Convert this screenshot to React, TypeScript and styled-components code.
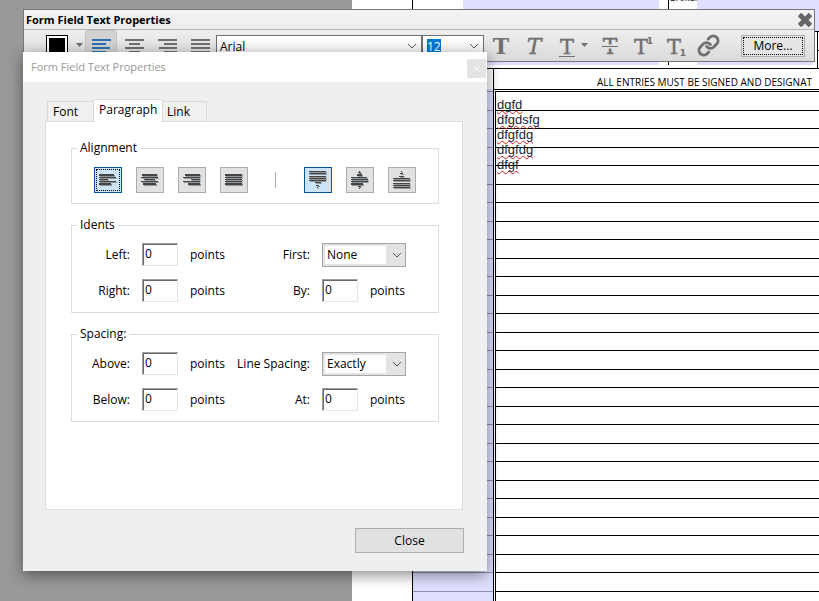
import React from "react";
import styled, { createGlobalStyle, css } from "styled-components";
import { Link as LinkIcon } from "lucide-react";

const ui = `"Open Sans", "Noto Sans", sans-serif`;
const ink = "#707070";
const lavender = "#dfe0ff";

const GlobalStyle = createGlobalStyle`
  *, *::before, *::after { box-sizing: border-box; }
  body { margin: 0; font: 12px/16px ${ui}; color: #000; }
  button, input, select, textarea { font: inherit; color: inherit; margin: 0; border-radius: 0; }
`;

const Desktop = styled.div`
  position: relative;
  height: 100vh;
  overflow: hidden;
  background: #999;
`;

/* ---------- document behind the windows ---------- */

const Page = styled.main`
  margin-left: 352px;
  padding-left: 60px;
  min-height: 100vh;
  background: #fff;
`;

const TopForm = styled.div`
  display: flex;
  height: 69px;
  border-bottom: 1px solid #000;
  border-left: 1px solid #000;
  padding-left: 50px;
`;

const TopField = styled.div`
  width: 196px;
  height: 65px;
  margin-right: 9px;
  background: ${lavender};
`;

const TopCell = styled.div`
  flex: 1;
  display: flex;
  height: 65px;
  border-left: 1px solid #000;
`;

const TopCaption = styled.span`
  display: flex;
  align-items: flex-end;
  width: 28px;
  height: 3px;
  padding-left: 1px;
  font-size: 9px;
  line-height: 10px;
`;

const TopCellRest = styled.div`
  flex: 1;
  background: ${lavender};
`;

const EdgeColumn = styled.div`
  display: flex;
  flex-direction: column;
  width: 6px;
  height: 68px;
`;

const EdgeField = styled.div`
  height: 32px;
  border-bottom: 1px solid #000;
  background: ${lavender};
`;

const EdgeCell = styled.div`
  height: 18px;
  margin-left: 4px;
  border-left: 1px solid #000;
  & + & { border-top: 1px solid #000; }
`;

const HeaderRow = styled.div`
  display: flex;
  height: 20px;
  padding-left: 81px;
`;

const HeaderText = styled.div`
  flex: 1;
  border-left: 1px solid #000;
  padding: 6px 0 0 103px;
  font-size: 10px;
  line-height: 14px;
  white-space: nowrap;
`;

const Ledger = styled.div`
  display: grid;
  grid-template-columns: 81px 1fr;
`;

const LabelColumn = styled.div`
  border-left: 1px solid #000;
  background: ${lavender};
`;

const LabelTop = styled.div`
  height: 3px;
  border-bottom: 1px solid #8e8eae;
`;

const EntryColumn = styled.div`
  position: relative;
  border-left: 3px double #000;
  border-top: 3px double #000;
`;

const Rule = styled.div<{ $soft?: boolean }>`
  height: 19px;
  border-bottom: 1px solid ${(p) => (p.$soft ? "#8e8eae" : "#000")};
  &:nth-of-type(even) { height: ${(p) => (p.$soft ? 19 : 18)}px; }
  ${(p) => p.$soft && css`&:nth-of-type(odd) { height: 18px; }`}
`;

const Entries = styled.textarea`
  position: absolute;
  top: 5px;
  left: 1px;
  width: 100%;
  height: 100%;
  padding: 0;
  border: 0;
  outline: 0;
  resize: none;
  overflow: hidden;
  background: transparent;
  color: #1d2433;
  font: 13px/15px "Liberation Sans", Arial, sans-serif;
  text-decoration: underline wavy #c22 1px;
  text-decoration-skip-ink: none;
  text-underline-offset: 1px;
`;

/* ---------- toolbar window ---------- */

const Toolbar = styled.section`
  position: absolute;
  top: 9px;
  left: 23px;
  right: 4px;
  border: 1px solid #777;
  background: linear-gradient(#f3f3f3, #ececec 36%, #eeeeee 40%, #dadada);
`;

const ToolbarTitle = styled.header`
  display: flex;
  justify-content: space-between;
  align-items: center;
  height: 20px;
  padding: 0 2px;
  border-bottom: 1px solid #b4b4b4;
`;

const ToolbarHeading = styled.h2`
  margin: 0;
  font-size: 11px;
  line-height: 18px;
  font-weight: 700;
  white-space: nowrap;
`;

const PlainButton = styled.button`
  display: flex;
  padding: 0;
  border: 0;
  background: none;
`;

const ToolRow = styled.div`
  display: flex;
  align-items: center;
  height: 31px;
  padding: 0 9px 0 22px;
`;

const Swatch = styled.button`
  width: 22px;
  height: 22px;
  padding: 0;
  border: 1px solid #000;
  background: #000;
  box-shadow: inset 0 0 0 2px #fff;
`;

const SwatchMenu = styled(PlainButton)`
  width: 17px;
  padding-left: 8px;
`;

const Tools = styled.div`
  display: flex;
  gap: 1px;
`;

const Tool = styled.button<{ $on?: boolean; $wide?: boolean }>`
  display: flex;
  align-items: center;
  justify-content: center;
  gap: ${(p) => (p.$wide ? 4 : 0)}px;
  width: ${(p) => (p.$wide ? 42 : 32)}px;
  height: 31px;
  padding: 0;
  border: 1px solid ${(p) => (p.$on ? "#c4c4c4" : "transparent")};
  border-radius: 3px;
  background: ${(p) => (p.$on ? "#d2d2d2" : "none")};
  color: ${(p) => (p.$on ? "#2a72b5" : ink)};
`;

const ComboFrame = styled.label<{ $w: number }>`
  display: flex;
  align-items: center;
  flex: 0 1 ${(p) => p.$w}px;
  height: 22px;
  border: 1px solid #6e6e6e;
  background: linear-gradient(#fff, #f2f2f2);
  padding: 2px 4px 0 3px;
`;

const ComboInput = styled.input`
  flex: 1;
  min-width: 0;
  padding: 0;
  border: 0;
  outline: 0;
  background: transparent;
`;

const Marked = styled.input`
  width: 14px;
  height: 15px;
  padding: 0;
  margin: 0 auto 0 1px;
  border: 0;
  outline: 0;
  background: #0078d7;
  color: #fff;
`;

const MoreButton = styled.button`
  width: 64px;
  height: 22px;
  margin-left: auto;
  padding: 0;
  border: 1px solid #adadad;
  background: #e6e6e6;
  outline: 1px dotted #000;
  outline-offset: -3px;
  line-height: 16px;
`;

/* ---------- dialog ---------- */

const Dialog = styled.section`
  position: absolute;
  top: 52px;
  left: 23px;
  width: 464px;
  max-width: calc(100vw - 23px);
  background: #efefef;
  box-shadow: 0 4px 14px rgba(0, 0, 0, 0.45);
`;

const DialogTitle = styled.header`
  display: flex;
  justify-content: space-between;
  align-items: center;
  height: 30px;
  padding: 0 1px 0 8px;
  background: #fff;
  color: #999;
`;

const DialogHeading = styled.h2`
  margin: 0;
  font-size: 11px;
  font-weight: 400;
`;

const DialogClose = styled.button`
  display: flex;
  align-items: center;
  justify-content: center;
  align-self: flex-end;
  width: 19px;
  height: 19px;
  margin-bottom: 4px;
  padding: 0;
  border: 0;
  background: #e3e3e3;
`;

const DialogBody = styled.div`
  padding: 17px 24px 18px 22px;
`;

const Tabs = styled.div`
  display: flex;
  align-items: flex-end;
  padding-left: 2px;
`;

const Tab = styled.button<{ $on?: boolean; $w: number }>`
  position: relative;
  width: ${(p) => p.$w}px;
  height: ${(p) => (p.$on ? 23 : 20)}px;
  margin-bottom: ${(p) => (p.$on ? -1 : 0)}px;
  padding: 0 0 ${(p) => (p.$on ? 2 : 0)}px 5px;
  border: 1px solid #d9d9d9;
  border-bottom: 0;
  background: ${(p) => (p.$on ? "#fff" : "#f0f0f0")};
  text-align: left;
  white-space: nowrap;
  &:last-child { border-left: 0; padding-left: 4px; }
  &:first-child { border-right: 0; }
`;

const Panel = styled.div`
  display: flex;
  flex-direction: column;
  gap: 13px;
  padding: 18px 23px 87px 25px;
  border: 1px solid #dcdcdc;
  background: #fff;
`;

const Group = styled.fieldset`
  min-width: 0;
  margin: 0;
  padding: 10px 0 9px;
  border: 1px solid #dcdcdc;
`;

const Legend = styled.legend`
  margin-left: 5px;
  padding: 0 3px;
  line-height: 16px;
`;

const AlignRow = styled.div`
  display: flex;
  align-items: center;
  gap: 14px;
  padding: 1px 0 1px 22px;
`;

const AlignButton = styled.button<{ $on?: boolean; $focus?: boolean }>`
  display: flex;
  align-items: center;
  justify-content: center;
  width: 28px;
  height: 26px;
  padding: 0;
  border: 1px solid ${(p) => (p.$on ? "#00559b" : "#adadad")};
  background: ${(p) => (p.$on ? "#cce4f7" : "#e1e1e1")};
  ${(p) => p.$focus && css`outline: 1px dotted #000; outline-offset: -3px;`}
`;

const Divider = styled.span`
  width: 1px;
  height: 16px;
  margin: 0 14px 0 13px;
  background: #b5b0a4;
`;

const Fields = styled.div`
  display: grid;
  grid-template-columns: 58px 36px 36px 72px 1fr;
  grid-auto-rows: 24px;
  gap: 12px;
  white-space: nowrap;
`;

const FieldLabel = styled.label`
  justify-self: end;
  line-height: 24px;
`;

const Unit = styled.span`
  line-height: 24px;
`;

const Control = styled.div`
  display: flex;
  gap: 12px;
`;

const NumberBox = styled.input`
  width: 36px;
  height: 23px;
  padding: 0 0 2px 2px;
  border: 1px solid #e3e3e3;
  border-top: 1px solid #a0a0a0;
  border-left: 1px solid #a0a0a0;
  box-shadow: inset 1px 1px 0 #696969;
  background: #fff;
`;

const SelectFrame = styled.span`
  position: relative;
  display: flex;
  width: 84px;
  height: 24px;
  svg { position: absolute; right: 4px; top: 9px; pointer-events: none; }
`;

const Select = styled.select`
  appearance: none;
  width: 100%;
  padding: 0 0 0 4px;
  border: 1px solid #a5a5a5;
  box-shadow: inset 0 0 0 2px #e3e3e3, inset -19px 0 0 #e3e3e3;
  background-color: #fff;
`;

const Footer = styled.footer`
  display: flex;
  justify-content: flex-end;
  margin: 18px -1px 0 0;
`;

const CloseButton = styled.button`
  width: 109px;
  height: 25px;
  padding: 0;
  border: 1px solid #adadad;
  background: #e1e1e1;
`;

/* ---------- drawings ---------- */

const Chevron = () => (
  <svg width="10" height="7" viewBox="0 0 10 7" fill="none" stroke="#555">
    <path d="M1 1l4 4 4-4" />
  </svg>
);

const Caret = () => (
  <svg width="7" height="5" viewBox="0 0 7 5" fill={ink}>
    <path d="M0 0h7L3.500 4z" />
  </svg>
);

type Bar = [x: number, w: number];

const ToolLines = ({ bars }: { bars: Bar[] }) => (
  <svg width="19" height="14" viewBox="0 0 19 14" fill="currentColor" shapeRendering="crispEdges">
    {bars.map(([x, w], i) => (
      <rect key={i} x={x} y={i * 4} width={w} height="2" />
    ))}
  </svg>
);

const toolBars: Record<string, Bar[]> = {
  left: [[0, 19], [0, 14], [0, 18], [0, 14]],
  center: [[0, 19], [4, 11], [0, 19], [4, 11]],
  right: [[0, 19], [6, 13], [1, 18], [6, 13]],
  justify: [[0, 19], [0, 19], [0, 19], [0, 19]],
};

type Line = [x: number, y: number, w: number, h: number];

const LineIcon = ({ lines, height }: { lines: Line[]; height: number }) => (
  <svg width="18" height={height} viewBox={`0 0 18 ${height}`} shapeRendering="crispEdges">
    {lines.map(([x, y, w, h], i) => (
      <rect key={`s${i}`} x={x + 1} y={y + 1} width={w} height={h} fill="#92979b" />
    ))}
    {lines.map(([x, y, w, h], i) => (
      <rect key={i} x={x} y={y} width={w} height={h} fill="#444" />
    ))}
  </svg>
);

const horizontal: Record<string, Line[]> = {
  Left: [[0, 0, 15, 2], [0, 3, 17, 1], [0, 5, 9, 1], [0, 7, 17, 1], [0, 9, 12, 2]],
  Center: [[1, 0, 15, 2], [0, 3, 17, 1], [3, 5, 11, 1], [0, 7, 17, 1], [2, 9, 13, 2]],
  Right: [[2, 0, 15, 2], [0, 3, 17, 1], [8, 5, 9, 1], [0, 7, 17, 1], [5, 9, 12, 2]],
  Justify: [[0, 0, 17, 2], [0, 3, 17, 1], [0, 5, 17, 1], [0, 7, 17, 1], [0, 9, 17, 2]],
};

const vertical: Record<string, Line[]> = {
  Top: [[0, 0, 17, 1], [0, 2, 17, 1], [0, 5, 17, 1], [0, 7, 17, 1], [0, 9, 17, 1], [6, 11, 6, 1], [7, 14, 3, 1], [8, 16, 1, 1]],
  Middle: [[8, 0, 1, 1], [7, 1, 3, 1], [6, 3, 5, 2], [0, 6, 16, 1], [0, 8, 17, 1], [0, 10, 17, 1], [0, 12, 12, 2], [7, 15, 3, 1], [8, 17, 1, 1]],
  Bottom: [[8, 0, 1, 1], [7, 2, 3, 1], [6, 5, 5, 1], [0, 7, 17, 1], [0, 9, 17, 1], [0, 12, 17, 1], [0, 14, 17, 1], [0, 16, 17, 1]],
};

type LetterProps = { x?: number; y?: number; size?: number; bold?: boolean; italic?: boolean };

const Letter = ({ x = 12, y = 19, size = 21, bold, italic }: LetterProps) => (
  <text
    x={x}
    y={y}
    textAnchor="middle"
    fontFamily="DejaVu Serif, serif"
    fontSize={size}
    fontWeight={bold ? 700 : 400}
    fontStyle={italic ? "italic" : "normal"}
    fill={ink}
    stroke={bold ? "none" : ink}
    strokeWidth="0.4"
  >
    T
  </text>
);

const LetterIcon = ({ children }: { children: React.ReactNode }) => (
  <svg width="22" height="22" viewBox="0 0 22 22" overflow="visible">{children}</svg>
);

const IndexDigit = ({ y }: { y: number }) => (
  <text x="19" y={y} textAnchor="middle" fontFamily="DejaVu Sans, sans-serif" fontSize="9" fontWeight="700" fill={ink}>
    1
  </text>
);

/* ---------- composition ---------- */

const NumberField = ({ id, label, wide }: { id: string; label: string; wide?: boolean }) => (
  <>
    <FieldLabel htmlFor={id}>{label}</FieldLabel>
    {wide ? (
      <Control>
        <NumberBox id={id} defaultValue="0" />
        <Unit>points</Unit>
      </Control>
    ) : (
      <>
        <NumberBox id={id} defaultValue="0" />
        <Unit>points</Unit>
      </>
    )}
  </>
);

const SelectField = ({ id, label, options }: { id: string; label: string; options: string[] }) => (
  <>
    <FieldLabel htmlFor={id}>{label}</FieldLabel>
    <Control>
      <SelectFrame>
        <Select id={id}>
          {options.map((o) => (
            <option key={o}>{o}</option>
          ))}
        </Select>
        <Chevron />
      </SelectFrame>
    </Control>
  </>
);

const rows = Array.from({ length: 28 }, (_, i) => i);

export default function App() {
  return (
    <>
      <GlobalStyle />
      <Desktop>
        <Page>
          <TopForm>
            <TopField />
            <TopCell>
              <TopCaption>Broker</TopCaption>
              <TopCellRest />
            </TopCell>
            <EdgeColumn>
              <EdgeField />
              <EdgeCell />
              <EdgeCell />
            </EdgeColumn>
          </TopForm>
          <HeaderRow>
            <HeaderText>ALL ENTRIES MUST BE SIGNED AND DESIGNAT</HeaderText>
          </HeaderRow>
          <Ledger>
            <LabelColumn>
              <LabelTop />
              {rows.map((r) => <Rule key={r} $soft />)}
            </LabelColumn>
            <EntryColumn>
              {rows.map((r) => <Rule key={r} />)}
              <Entries aria-label="Entries" spellCheck={false} defaultValue={"dgfd\ndfgdsfg\ndfgfdg\ndfgfdg\ndfgf"} />
            </EntryColumn>
          </Ledger>
        </Page>

        <Toolbar aria-label="Text toolbar">
          <ToolbarTitle>
            <ToolbarHeading>Form Field Text Properties</ToolbarHeading>
            <PlainButton aria-label="Close toolbar">
              <svg width="14" height="14" viewBox="0 0 14 14" stroke="#666" strokeWidth="5">
                <path d="M1.500 1.500l11 11M12.500 1.500l-11 11" />
              </svg>
            </PlainButton>
          </ToolbarTitle>
          <ToolRow>
            <Swatch aria-label="Text colour" />
            <SwatchMenu aria-label="Choose colour"><Caret /></SwatchMenu>
            <Tools>
              {Object.entries(toolBars).map(([name, bars]) => (
                <Tool key={name} $on={name === "left"} aria-label={`Align ${name}`}>
                  <ToolLines bars={bars} />
                </Tool>
              ))}
            </Tools>
            <ComboFrame $w={206}>
              <ComboInput aria-label="Font" defaultValue="Arial" />
              <Chevron />
            </ComboFrame>
            <ComboFrame $w={62}>
              <Marked aria-label="Font size" defaultValue="12" />
              <Chevron />
            </ComboFrame>
            <Tools>
              <Tool aria-label="Bold"><LetterIcon><Letter bold size={22} /></LetterIcon></Tool>
              <Tool aria-label="Italic"><LetterIcon><Letter italic size={22} /></LetterIcon></Tool>
              <Tool aria-label="Underline" $wide>
                <LetterIcon>
                  <Letter />
                  <path d="M4 21.500h16" stroke={ink} />
                </LetterIcon>
                <Caret />
              </Tool>
              <Tool aria-label="Strikethrough">
                <LetterIcon>
                  <Letter size={22} />
                  <path d="M3 11.500h18" stroke="#e3e3e3" strokeWidth="4" />
                  <path d="M4 11.500h16" stroke={ink} />
                </LetterIcon>
              </Tool>
              <Tool aria-label="Superscript"><LetterIcon><Letter x={10} /><IndexDigit y={9} /></LetterIcon></Tool>
              <Tool aria-label="Subscript"><LetterIcon><Letter x={10} /><IndexDigit y={21} /></LetterIcon></Tool>
              <Tool aria-label="Insert link"><LinkIcon size={23} strokeWidth={3} /></Tool>
            </Tools>
            <MoreButton>More...</MoreButton>
          </ToolRow>
        </Toolbar>

        <Dialog role="dialog" aria-label="Form Field Text Properties">
          <DialogTitle>
            <DialogHeading>Form Field Text Properties</DialogHeading>
            <DialogClose aria-label="Close dialog">
              <svg width="6" height="6" viewBox="0 0 6 6" stroke="#f6f6f6" strokeWidth="1">
                <path d="M0 0l6 6M6 0l-6 6" />
              </svg>
            </DialogClose>
          </DialogTitle>
          <DialogBody>
            <Tabs role="tablist">
              <Tab role="tab" $w={46}>Font</Tab>
              <Tab role="tab" aria-selected $on $w={70}>Paragraph</Tab>
              <Tab role="tab" $w={44}>Link</Tab>
            </Tabs>
            <Panel role="tabpanel">
              <Group>
                <Legend>Alignment</Legend>
                <AlignRow>
                  {Object.entries(horizontal).map(([name, lines]) => (
                    <AlignButton key={name} aria-label={name} $on={name === "Left"} $focus={name === "Left"}>
                      <LineIcon lines={lines} height={12} />
                    </AlignButton>
                  ))}
                  <Divider />
                  {Object.entries(vertical).map(([name, lines]) => (
                    <AlignButton key={name} aria-label={name} $on={name === "Top"}>
                      <LineIcon lines={lines} height={18} />
                    </AlignButton>
                  ))}
                </AlignRow>
              </Group>
              <Group>
                <Legend>Idents</Legend>
                <Fields>
                  <NumberField id="left" label="Left:" />
                  <SelectField id="first" label="First:" options={["None", "Indent", "Outdent"]} />
                  <NumberField id="right" label="Right:" />
                  <NumberField id="by" label="By:" wide />
                </Fields>
              </Group>
              <Group>
                <Legend>Spacing:</Legend>
                <Fields>
                  <NumberField id="above" label="Above:" />
                  <SelectField id="lines" label="Line Spacing:" options={["Exactly", "Single", "Double"]} />
                  <NumberField id="below" label="Below:" />
                  <NumberField id="at" label="At:" wide />
                </Fields>
              </Group>
            </Panel>
            <Footer>
              <CloseButton>Close</CloseButton>
            </Footer>
          </DialogBody>
        </Dialog>
      </Desktop>
    </>
  );
}
